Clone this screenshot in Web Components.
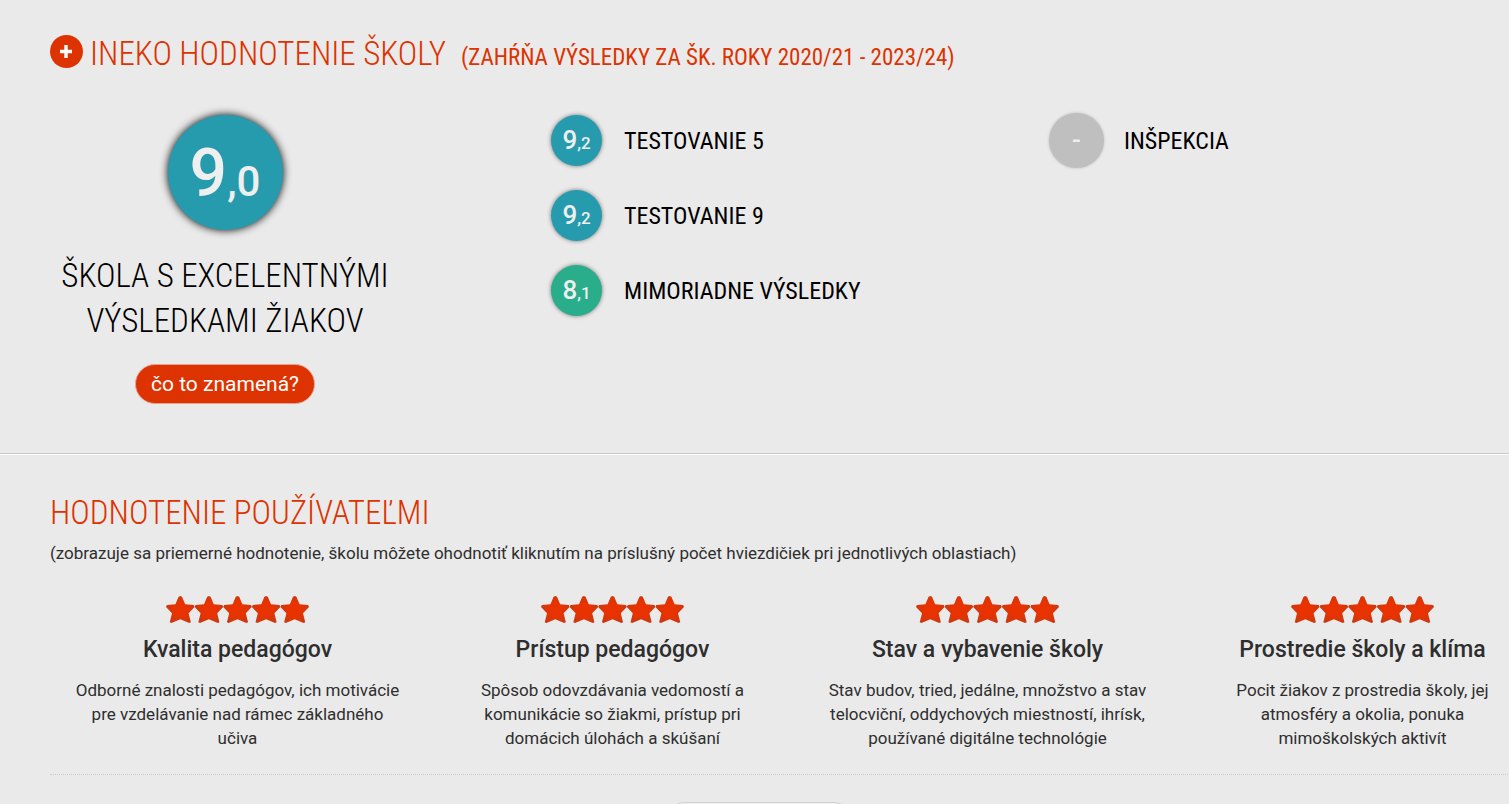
<!DOCTYPE html>
<html lang="sk">
<head>
<meta charset="utf-8">
<title>INEKO hodnotenie školy</title>
<style>
  html, body { margin: 0; height: 100%; overflow: hidden; }
  body {
    background: #eaeaea; color: #2e2e2e;
    font: 17px/24px Roboto, "Liberation Sans", sans-serif;
    --accent: #dd3300;
    --condensed: "Roboto Condensed", "Liberation Sans Narrow", Roboto, sans-serif;
  }
</style>
</head>
<body>
<school-page></school-page>
<script>
const define = (name, html, setup) => {
  const template = document.createElement('template');
  template.innerHTML = html;
  customElements.define(name, class extends HTMLElement {
    constructor() {
      super();
      this.attachShadow({ mode: 'open' }).append(template.content.cloneNode(true));
    }
    connectedCallback() { if (setup) setup(this, this.shadowRoot); }
  });
};

define('section-title', `
<style>
  :host { display: block; color: var(--accent); }
  h2 { margin: 0; display: flex; align-items: baseline; gap: 15px; font: 300 33px/44px var(--condensed); text-transform: uppercase; white-space: nowrap; }
  ::slotted(small) { font-size: 23px; font-weight: 400; }
</style>
<h2><slot></slot><slot name="note"></slot></h2>`);

define('toggle-button', `
<style>
  :host { display: block; flex: none; }
  button { display: block; width: 33px; height: 33px; padding: 0; border: 0; border-radius: 50%; background: var(--accent); cursor: pointer; }
  svg { display: block; }
</style>
<button type="button" aria-label="Rozbaliť"><svg width="33" height="33" viewBox="0 0 33 33"><path d="M16 10v13M10 16.5h12" stroke="#fff" stroke-width="3.4"/></svg></button>`);

define('score-badge', `
<style>
  :host { display: flex; flex: none; justify-content: center; align-items: center; box-sizing: border-box; width: 51px; height: 51px; padding-top: 2px; border-radius: 50%; background: #279bae; color: #efefef; box-shadow: 0 0 4px rgba(0,0,0,.5); font: 500 26px/40px Roboto, sans-serif; }
  :host([tone="green"]) { background: #29ad8b; }
  :host([tone="none"]) { width: 55px; height: 55px; margin: -2px; padding: 0 0 2px; background: #bfbfbf; box-shadow: 0 0 3px rgba(0,0,0,.2); }
  :host([size="large"]) { width: 115px; height: 115px; padding-top: 10px; box-shadow: 0 0 8px #000; font-size: 66px; line-height: 80px; }
  ::slotted(small) { font-size: 17px; }
  :host([size="large"]) ::slotted(small) { font-size: 42px; }
</style>
<span><slot></slot></span>`);

define('score-row', `
<style>
  :host { display: flex; align-items: center; gap: 22px; color: #000; font: 400 24px/30px var(--condensed); text-transform: uppercase; white-space: nowrap; }
</style>
<slot name="badge"></slot><span><slot></slot></span>`);

define('pill-button', `
<style>
  :host { display: block; }
  button { display: block; height: 40px; padding: 0 15px; border: 1px solid #e2a292; border-radius: 20px; background: var(--accent); color: #fff; font: 400 21px/38px Roboto, sans-serif; cursor: pointer; }
  :host([plain]) button { width: 188px; border-color: #d0d0d0; background: #f2f2f2; }
</style>
<button type="button"><slot></slot></button>`);

define('star-rating', `
<style>
  :host { display: block; width: 143px; }
  fieldset { display: grid; grid-template-columns: repeat(5, 1fr); margin: 0; padding: 0; border: 0; }
  input { appearance: none; width: 100%; height: 27px; margin: 0; cursor: pointer;
    background: radial-gradient(circle, #e83200 35%, #c83a12 75%);
    clip-path: polygon(44% 3%, 50% 0, 56% 3%, 67% 31%, 97% 33%, 100% 41%, 79% 64%, 87% 97%, 81% 100%, 50% 86%, 19% 100%, 13% 97%, 21% 64%, 0 41%, 3% 33%, 33% 31%); }
</style>
<fieldset></fieldset>`, (el, root) => {
  const set = root.querySelector('fieldset');
  if (set.children.length) return;
  for (let i = 1; i <= 5; i++) {
    const star = document.createElement('input');
    star.type = 'radio';
    star.name = 'stars';
    star.checked = i === 5;
    star.setAttribute('aria-label', String(i));
    set.append(star);
  }
});

define('rating-card', `
<style>
  :host { display: flex; flex-direction: column; align-items: center; padding: 0 25px; text-align: center; }
  h3 { margin: 9px 0 10px; font: 500 23px/36px Roboto, sans-serif; white-space: nowrap; }
  p { margin: 0; }
</style>
<star-rating></star-rating><h3></h3><p><slot></slot></p>`, (el, root) => {
  const heading = el.getAttribute('heading');
  root.querySelector('h3').textContent = heading;
  root.querySelector('star-rating').shadowRoot.querySelector('fieldset').setAttribute('aria-label', heading);
});

define('school-page', `
<style>
  :host { display: block; overflow: hidden; height: 100%; }
  section { padding-left: 50px; margin-right: -41px; }
  .scores { padding-top: 32px; padding-bottom: 49px; border-bottom: 1px solid #c8c8c8; }
  .users { padding-top: 36px; border-top: 1px solid #fff; }
  .head { display: flex; align-items: flex-start; gap: 7px; }
  toggle-button { padding-top: 3px; }
  .grid { display: grid; grid-template-columns: repeat(3, 1fr); padding-top: 35px; }
  .overall { display: flex; flex-direction: column; align-items: center; width: 70%; }
  .overall p { margin: 23px 0 21px; color: #000; text-align: center; text-transform: uppercase; font: 300 33px/45px var(--condensed); }
  .list { display: flex; flex-direction: column; gap: 24px; padding-left: 1px; }
  .intro { margin: 6px 0 31px; }
  .cards { display: grid; grid-template-columns: repeat(4, 1fr); padding-bottom: 24px; border-bottom: 1px dotted #c8c8c8; }
  .more { display: flex; justify-content: center; margin: 27px 82px 0 0; }
</style>
<section class="scores">
  <div class="head"><toggle-button></toggle-button>
    <section-title>INEKO hodnotenie školy<small slot="note">(zahŕňa výsledky za šk. roky 2020/21 - 2023/24)</small></section-title></div>
  <div class="grid">
    <div class="overall">
      <score-badge size="large">9<small>,0</small></score-badge>
      <p>Škola s excelentnými<br>výsledkami žiakov</p>
      <pill-button>čo to znamená?</pill-button>
    </div>
    <div class="list">
      <score-row><score-badge slot="badge">9<small>,2</small></score-badge>Testovanie 5</score-row>
      <score-row><score-badge slot="badge">9<small>,2</small></score-badge>Testovanie 9</score-row>
      <score-row><score-badge slot="badge" tone="green">8<small>,1</small></score-badge>Mimoriadne výsledky</score-row>
    </div>
    <div class="list">
      <score-row><score-badge slot="badge" tone="none">-</score-badge>Inšpekcia</score-row>
    </div>
  </div>
</section>
<section class="users">
  <section-title>Hodnotenie používateľmi</section-title>
  <p class="intro">(zobrazuje sa priemerné hodnotenie, školu môžete ohodnotiť kliknutím na príslušný počet hviezdičiek pri jednotlivých oblastiach)</p>
  <div class="cards">
    <rating-card heading="Kvalita pedagógov">Odborné znalosti pedagógov, ich motivácie pre vzdelávanie nad rámec základného učiva</rating-card>
    <rating-card heading="Prístup pedagógov">Spôsob odovzdávania vedomostí a komunikácie so žiakmi, prístup pri domácich úlohách a skúšaní</rating-card>
    <rating-card heading="Stav a vybavenie školy">Stav budov, tried, jedálne, množstvo a stav telocviční, oddychových miestností, ihrísk, používané digitálne technológie</rating-card>
    <rating-card heading="Prostredie školy a klíma">Pocit žiakov z prostredia školy, jej atmosféry a okolia, ponuka mimoškolských aktivít</rating-card>
  </div>
  <div class="more"><pill-button plain></pill-button></div>
</section>`);
</script>
</body>
</html>
